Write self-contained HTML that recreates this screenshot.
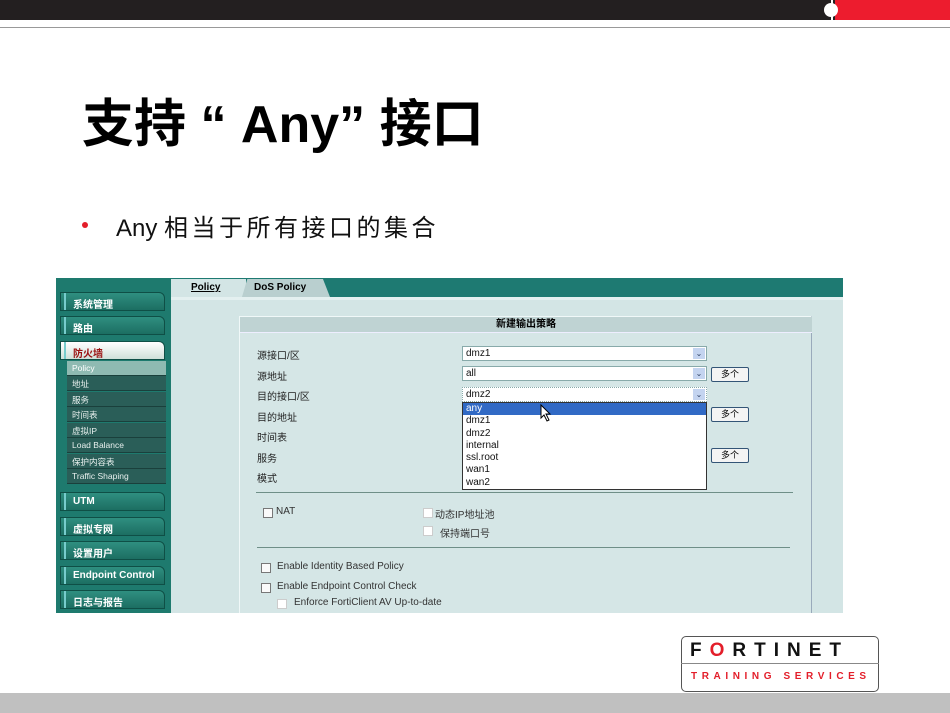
<!DOCTYPE html>
<html><head><meta charset="utf-8"><style>
*{margin:0;padding:0;box-sizing:border-box}
body{width:950px;height:713px;position:relative;background:#fff;overflow:hidden;font-family:"Liberation Sans","Noto Sans CJK SC",sans-serif}
.a{position:absolute}
.sb{position:absolute;left:60px;width:105px;height:19px;background:linear-gradient(#2f8f80,#1c6e62);border:1px solid #0f4f46;border-radius:0 6px 0 0;color:#fff;font-size:10px;font-weight:bold;padding:3px 0 0 12px}
.sb:before{content:"";position:absolute;left:3px;top:0;bottom:0;width:2px;background:#7cc}
.sub{position:absolute;left:67px;width:99px;height:15px;background:#2a5e58;border-bottom:1px solid #1a403c;color:#e8f0ee;font-size:8.5px;padding:2px 0 0 5px}
.lbl{position:absolute;left:257px;font-size:10px;color:#222}
.sel{position:absolute;left:462px;width:245px;height:15px;background:#fff;border:1px solid #8aa;font-size:10px;padding:1px 3px;color:#111}
.sel i{position:absolute;right:1px;top:1px;width:12px;height:11px;background:#c4d4f0;font-style:normal;font-size:8px;color:#346;text-align:center;line-height:11px}
.btn{position:absolute;left:711px;width:38px;height:15px;border:1px solid #357;border-radius:2px;background:#f4f4f4;font-size:9px;text-align:center;line-height:13px}
.cb{position:absolute;width:10px;height:10px;border:1px solid #777;background:#fafafa}
.t{position:absolute;font-size:10px;color:#333}
</style></head><body>
<div class="a" style="left:0;top:0;width:835px;height:20px;background:#231f20"></div>
<div class="a" style="left:835px;top:0;width:115px;height:20px;background:#ed1c2e"></div>
<div class="a" style="left:824px;top:3px;width:14px;height:14px;border-radius:50%;background:#fff"></div>
<div class="a" style="left:831px;top:0;width:2px;height:28px;background:#fff"></div>
<div class="a" style="left:0;top:27px;width:950px;height:1px;background:#999"></div>
<div class="a" style="left:82px;top:92px;font-size:52px;font-weight:bold;color:#000;line-height:66px;letter-spacing:0;white-space:nowrap">支持 “ Any” 接口</div>
<div class="a" style="left:82px;top:222px;width:6px;height:6px;border-radius:50%;background:#e31e2a"></div>
<div class="a" style="left:116px;top:213px;font-size:24px;color:#111;line-height:32px;white-space:nowrap">Any <span style="letter-spacing:3.5px">相当于所有接口的集合</span></div>

<!-- screenshot -->
<div class="a" style="left:56px;top:278px;width:787px;height:335px;background:#d3e5e5;overflow:hidden">
 <div class="a" style="left:0;top:0;width:115px;height:335px;background:#1e7a6e"></div>
 <div class="a" style="left:115px;top:0;width:672px;height:19px;background:#1e7a72"></div>
 <div class="a" style="left:115px;top:19px;width:672px;height:3px;background:#e4f0f0"></div>
 <div class="a" style="left:115px;top:1px;width:75px;height:18px;background:#d3e5e5;font-size:10px;font-weight:bold;padding:3px 0 0 20px"><u>Policy</u></div>
 <div class="a" style="left:186px;top:1px;width:88px;height:18px;background:#b9cfcf;clip-path:polygon(6% 0,92% 0,100% 100%,0 100%);font-size:10px;font-weight:bold;padding:3px 0 0 12px">DoS Policy</div>
 <div class="a" style="left:183px;top:38px;width:573px;height:300px;background:#d5e6e6;border-left:1px solid #f0f8f8;border-top:1px solid #f0f8f8;border-right:1px solid #9ab"></div>
 <div class="a" style="left:184px;top:39px;width:572px;height:16px;background:#bfd3d3;border-bottom:1px solid #eef;font-size:10px;font-weight:bold;text-align:center;line-height:16px">新建输出策略</div>
</div>
<div class="sb" style="top:292px">系统管理</div>
<div class="sb" style="top:316px">路由</div>
<div class="sb" style="top:341px;background:linear-gradient(#fff,#cfe0d8);color:#9a1010">防火墙</div>
<div class="sub" style="top:361px;background:#8fbab2;color:#fff">Policy</div>
<div class="sub" style="top:376px">地址</div>
<div class="sub" style="top:392px">服务</div>
<div class="sub" style="top:407px">时间表</div>
<div class="sub" style="top:423px">虚拟IP</div>
<div class="sub" style="top:438px">Load Balance</div>
<div class="sub" style="top:454px">保护内容表</div>
<div class="sub" style="top:469px">Traffic Shaping</div>
<div class="sb" style="top:492px">UTM</div>
<div class="sb" style="top:517px">虚拟专网</div>
<div class="sb" style="top:541px">设置用户</div>
<div class="sb" style="top:566px">Endpoint Control</div>
<div class="sb" style="top:590px">日志与报告</div>

<div class="lbl" style="top:347px">源接口/区</div>
<div class="lbl" style="top:368px">源地址</div>
<div class="lbl" style="top:388px">目的接口/区</div>
<div class="lbl" style="top:409px">目的地址</div>
<div class="lbl" style="top:429px">时间表</div>
<div class="lbl" style="top:450px">服务</div>
<div class="lbl" style="top:470px">模式</div>
<div class="sel" style="top:346px">dmz1<i>⌄</i></div>
<div class="sel" style="top:366px">all<i>⌄</i></div>
<div class="sel" style="top:387px;border-style:dotted">dmz2<i>⌄</i></div>
<div class="btn" style="top:367px">多个</div>
<div class="btn" style="top:407px">多个</div>
<div class="btn" style="top:448px">多个</div>
<div class="a" style="left:462px;top:402px;width:245px;height:88px;background:#fff;border:1px solid #333;font-size:10px;line-height:12.3px;color:#111">
 <div style="background:#316ac5;color:#fff;padding-left:3px">any</div>
 <div style="padding-left:3px">dmz1<br>dmz2<br>internal<br>ssl.root<br>wan1<br>wan2</div>
</div>
<svg class="a" style="left:540px;top:404px" width="12" height="18"><path d="M1 1 L1 14 L4 11 L7 17 L9 16 L6 10 L10 10 Z" fill="#fff" stroke="#000"/></svg>
<div class="a" style="left:256px;top:492px;width:537px;height:1px;background:#6f8f88"></div>
<div class="a" style="left:257px;top:547px;width:533px;height:1px;background:#6f8f88"></div>
<div class="cb" style="left:263px;top:508px"></div><div class="t" style="left:276px;top:506px">NAT</div>
<div class="cb" style="left:423px;top:508px;border-color:#ccc;background:#fff"></div><div class="t" style="left:435px;top:506px">动态IP地址池</div>
<div class="cb" style="left:423px;top:526px;border-color:#ccc;background:#fff"></div><div class="t" style="left:440px;top:525px">保持端口号</div>
<div class="cb" style="left:261px;top:563px"></div><div class="t" style="left:277px;top:561px">Enable Identity Based Policy</div>
<div class="cb" style="left:261px;top:583px"></div><div class="t" style="left:277px;top:581px">Enable Endpoint Control Check</div>
<div class="cb" style="left:277px;top:599px;border-color:#ccc;background:#fff"></div><div class="t" style="left:294px;top:597px">Enforce FortiClient AV Up-to-date</div>

<!-- logo -->
<div class="a" style="left:681px;top:636px;width:198px;height:56px;border:1px solid #555;border-radius:5px;background:#fff"></div>
<div class="a" style="left:681px;top:663px;width:198px;height:1px;background:#888"></div>
<div class="a" style="left:690px;top:640px;font-size:19px;font-weight:bold;letter-spacing:8px;color:#111;white-space:nowrap;line-height:22px">F<span style="color:#e31e2a">O</span>RTINET</div>
<div class="a" style="left:691px;top:671px;font-size:10px;font-weight:bold;letter-spacing:4.6px;color:#e31e2a;white-space:nowrap;line-height:12px">TRAINING SERVICES</div>
<div class="a" style="left:0;top:693px;width:950px;height:20px;background:#c0c0c0"></div>
</body></html>
